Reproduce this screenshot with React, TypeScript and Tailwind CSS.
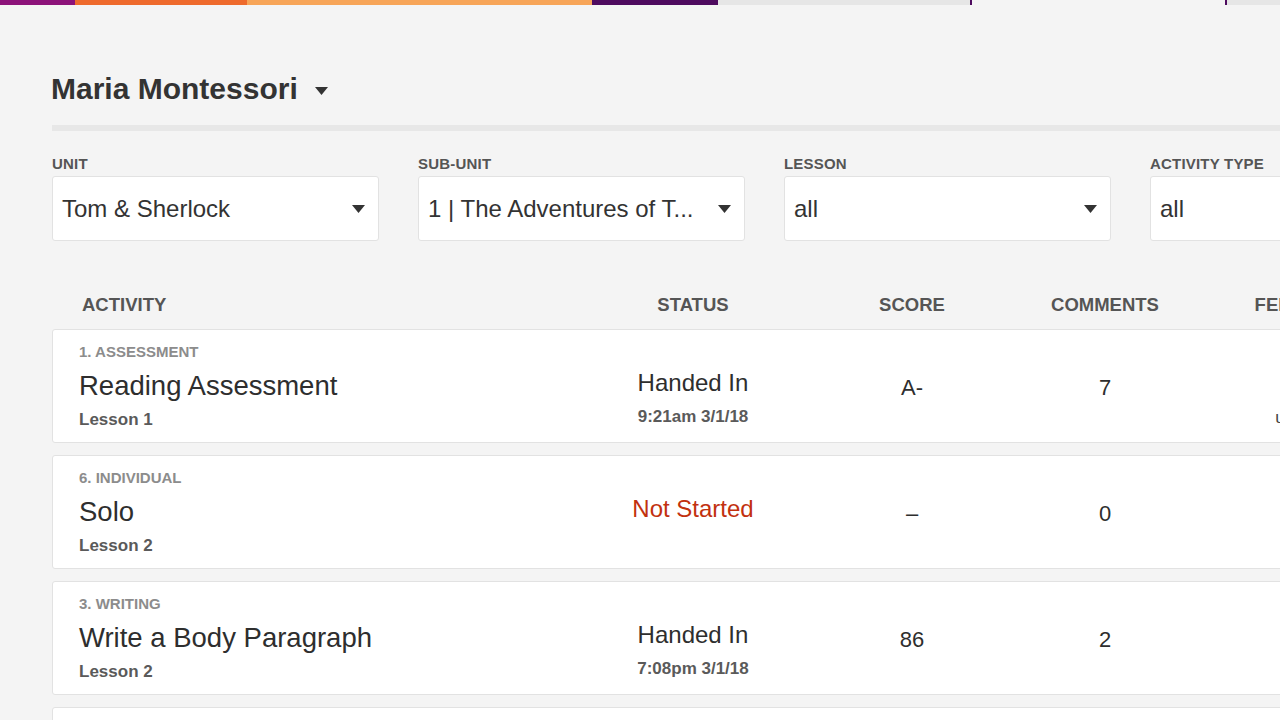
import React from 'react';

const Caret = ({ className = '' }: { className?: string }) => (
  <svg width="13" height="8" viewBox="0 0 13 8" className={className}>
    <path d="M0 0h13L6.5 8z" fill="currentColor" />
  </svg>
);

const filters = [
  { label: 'UNIT', value: 'Tom & Sherlock' },
  { label: 'SUB-UNIT', value: '1 | The Adventures of T...' },
  { label: 'LESSON', value: 'all' },
  { label: 'ACTIVITY TYPE', value: 'all' },
];

interface Row {
  category: string;
  title: string;
  lesson: string;
  status: string;
  handedAt?: string;
  score: string;
  comments: string;
  feedback?: string;
}

const rows: Row[] = [
  {
    category: '1. ASSESSMENT',
    title: 'Reading Assessment',
    lesson: 'Lesson 1',
    status: 'Handed In',
    handedAt: '9:21am 3/1/18',
    score: 'A-',
    comments: '7',
    feedback: 'updated',
  },
  {
    category: '6. INDIVIDUAL',
    title: 'Solo',
    lesson: 'Lesson 2',
    status: 'Not Started',
    score: '–',
    comments: '0',
  },
  {
    category: '3. WRITING',
    title: 'Write a Body Paragraph',
    lesson: 'Lesson 2',
    status: 'Handed In',
    handedAt: '7:08pm 3/1/18',
    score: '86',
    comments: '2',
  },
];

const ActivityCard = ({ row }: { row: Row }) => {
  const notStarted = row.status === 'Not Started';
  return (
    <div className="flex w-[1500px] shrink-0 rounded-[3px] border border-[#e2e2e2] bg-white">
      <div className="w-[530px] pl-[26px] pt-[13px] pb-[12px]">
        <div className="text-[15px] font-bold leading-[17px] text-[#8c8c8c]">{row.category}</div>
        <div className="mt-[10px] text-[27.5px] leading-[32px] text-[#2e2e2e]">{row.title}</div>
        <div className="mt-[8px] text-[17px] font-bold leading-[20px] text-[#5a5a5a]">{row.lesson}</div>
      </div>
      <div className="w-[220px] pt-[39px] text-center">
        <div className={`text-[24px] leading-[28px] ${notStarted ? 'text-[#c2310f]' : 'text-[#2e2e2e]'}`}>
          {row.status}
        </div>
        {row.handedAt && (
          <div className="mt-[10px] text-[17px] font-bold leading-[20px] text-[#5a5a5a]">{row.handedAt}</div>
        )}
      </div>
      <div className="w-[218px] pt-[44px] text-center text-[22px] leading-[28px] text-[#2e2e2e]">
        {row.score}
      </div>
      <div className="w-[168px] pt-[44px] text-center text-[22px] leading-[28px] text-[#2e2e2e]">
        {row.comments}
      </div>
      <div className="w-[234px] pt-[78px] text-center text-[17px] leading-[20px] text-[#444]">
        {row.feedback}
      </div>
    </div>
  );
};

const App: React.FC = () => {
  return (
    <div className="h-[720px] w-[1280px] overflow-hidden bg-[#f4f4f4] font-['Liberation_Sans',Arial,sans-serif] text-[#333]">
      {/* progress strip */}
      <div className="flex h-[5px]">
        <div className="w-[75px] bg-[#8c1279]" />
        <div className="w-[172px] bg-[#ee6a2c]" />
        <div className="w-[345px] bg-[#f7a558]" />
        <div className="w-[126px] bg-[#4e0b5f]" />
        <div className="w-[252px] bg-[#e6e6e6]" />
        <div className="w-[2px] bg-[#4e0b5f]" />
        <div className="w-[253px]" />
        <div className="w-[2px] bg-[#4e0b5f]" />
        <div className="flex-1 bg-[#e6e6e6]" />
      </div>

      <div className="w-[1500px] pl-[52px] pt-[66px]">
        <div className="-ml-px flex h-[36px] items-center">
          <h1 className="text-[30px] font-bold leading-[36px] text-[#333]">Maria Montessori</h1>
          <Caret className="ml-[17px] mt-[3px] text-[#333]" />
        </div>

        <div className="mt-[18px] h-[6px] bg-[#e7e7e7]" />

        <div className="mt-[24px] flex gap-[39px]">
          {filters.map((f) => (
            <div key={f.label} className="w-[327px] shrink-0">
              <div className="text-[15px] font-bold leading-[18px] tracking-[0.2px] text-[#555]">{f.label}</div>
              <div className="mt-[3px] flex h-[65px] items-center justify-between rounded-[3px] border border-[#e2e2e2] bg-white pl-[9px] pr-[13px]">
                <span className="whitespace-nowrap text-[24px] leading-[28px] text-[#333]">{f.value}</span>
                <Caret className="text-[#333]" />
              </div>
            </div>
          ))}
        </div>

        <div className="mt-[53px] flex text-[18.5px] font-bold leading-[22px] text-[#555]">
          <div className="w-[531px] pl-[30px]">ACTIVITY</div>
          <div className="w-[220px] text-center">STATUS</div>
          <div className="w-[218px] text-center">SCORE</div>
          <div className="w-[168px] text-center">COMMENTS</div>
          <div className="w-[234px] text-center">FEEDBACK</div>
        </div>

        <div className="mt-[13px] flex flex-col gap-[12px]">
          {rows.map((r) => (
            <ActivityCard key={r.category} row={r} />
          ))}
          <div className="h-[114px] w-[1500px] shrink-0 rounded-[3px] border border-[#e2e2e2] bg-white" />
        </div>
      </div>
    </div>
  );
};

export default App;
